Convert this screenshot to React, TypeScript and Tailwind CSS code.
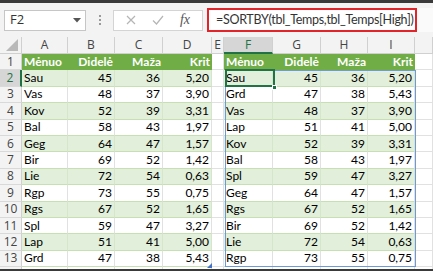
import React from "react";

const left: [string, string, string, string][] = [
  ["Sau", "45", "36", "5,20"],
  ["Vas", "48", "37", "3,90"],
  ["Kov", "52", "39", "3,31"],
  ["Bal", "58", "43", "1,97"],
  ["Geg", "64", "47", "1,57"],
  ["Bir", "69", "52", "1,42"],
  ["Lie", "72", "54", "0,63"],
  ["Rgp", "73", "55", "0,75"],
  ["Rgs", "67", "52", "1,65"],
  ["Spl", "59", "47", "3,27"],
  ["Lap", "51", "41", "5,00"],
  ["Grd", "47", "38", "5,43"],
];

const right: [string, string, string, string][] = [
  ["Sau", "45", "36", "5,20"],
  ["Grd", "47", "38", "5,43"],
  ["Vas", "48", "37", "3,90"],
  ["Lap", "51", "41", "5,00"],
  ["Kov", "52", "39", "3,31"],
  ["Bal", "58", "43", "1,97"],
  ["Spl", "59", "47", "3,27"],
  ["Geg", "64", "47", "1,57"],
  ["Rgs", "67", "52", "1,65"],
  ["Bir", "69", "52", "1,42"],
  ["Lie", "72", "54", "0,63"],
  ["Rgp", "73", "55", "0,75"],
];

const cols = ["A", "B", "C", "D", "E", "F", "G", "H", "I", ""];
const headers = ["Mėnuo", "Didelė", "Maža", "Krit"];

function TableCells({ row, data }: { row: number; data: [string, string, string, string][] }) {
  if (row === 1) {
    return (
      <>
        {headers.map((h, i) => (
          <div
            key={h}
            className={`bg-[#70ad47] text-white font-bold flex items-center px-[2px] ${i === 0 ? "justify-start" : "justify-end"}`}
          >
            {h}
          </div>
        ))}
      </>
    );
  }
  const d = data[row - 2];
  const band = row % 2 === 0;
  return (
    <>
      {d.map((v, i) => (
        <div
          key={i}
          className={`flex items-center px-[2px] border-b border-r ${band ? "bg-[#e2efda] border-b-[#c6e0b4] border-r-[#d6e6cc]" : "bg-white border-b-[#c6e0b4] border-r-[#e1e1e1]"} ${i === 0 ? "justify-start" : "justify-end"}`}
        >
          {v}
        </div>
      ))}
    </>
  );
}

function Blank() {
  return <div className="border-r border-b border-[#e1e1e1]" />;
}

export default function App() {
  const rows = Array.from({ length: 13 }, (_, i) => i + 1);
  return (
    <div className="w-[433px] h-[275px] overflow-hidden bg-white flex flex-col font-['Lato',sans-serif] text-[12px] text-black">
      <div className="h-[3px] bg-[#3a3a3a] shrink-0" />
      {/* toolbar */}
      <div className="h-[34px] shrink-0 bg-[#f3f3f3] flex items-center pl-[4px]">
        <div className="w-[82px] h-[21px] bg-white border border-[#c6c6c6] flex items-center justify-between pl-[5px] pr-[3px] text-[13px] text-[#333] font-['Open_Sans',sans-serif]">
          <span>F2</span>
          <svg width="8" height="5" viewBox="0 0 8 5" className="mr-[1px]">
            <path d="M0 0 L8 0 L4 4.5 Z" fill="#555" />
          </svg>
        </div>
        <div className="w-[27px] flex flex-col items-center justify-center gap-[2px]">
          <span className="w-[2px] h-[2px] bg-[#9a9a9a]" />
          <span className="w-[2px] h-[2px] bg-[#9a9a9a]" />
          <span className="w-[2px] h-[2px] bg-[#9a9a9a]" />
        </div>
        <div className="w-[90px] h-[21px] bg-white border border-[#d4d4d4] flex items-center justify-around px-[4px]">
          <svg width="10" height="10" viewBox="0 0 10 10">
            <path d="M1 1 L9 9 M9 1 L1 9" stroke="#b5b5b5" strokeWidth="1.2" />
          </svg>
          <svg width="12" height="10" viewBox="0 0 12 10">
            <path d="M1 5.5 L4.5 9 L11 1" stroke="#b5b5b5" strokeWidth="1.2" fill="none" />
          </svg>
          <span className="font-['Liberation_Serif',serif] italic text-[14px] text-[#555] leading-none">fx</span>
        </div>
        <div className="ml-[4px] w-[210px] h-[24px] bg-white border-2 border-[#e0242a] flex items-center pl-[7px] text-[12.5px] text-[#333] tracking-[-0.3px] whitespace-nowrap overflow-hidden">
          =SORTBY(tbl_Temps,tbl_Temps[High])
        </div>
        <div className="flex-1 h-[24px] bg-[#fafafa]" />
      </div>
      {/* grid */}
      <div className="relative h-[232px] shrink-0 overflow-hidden">
        <div className="grid grid-cols-[22px_46px_47px_48px_49px_12px_49px_48px_47px_47px_1fr] grid-rows-[17px_repeat(14,16.4px)]">
          {/* column headers */}
          <div className="bg-[#f3f3f3] border-r border-b border-[#d0d0d0] relative">
            <svg width="12" height="12" viewBox="0 0 12 12" className="absolute right-[3px] bottom-[2px]">
              <path d="M12 0 L12 12 L0 12 Z" fill="#b9b9b9" />
            </svg>
          </div>
          {cols.map((c) => (
            <div
              key={c || "J"}
              className={`flex items-center justify-center text-[12px] font-['Open_Sans',sans-serif] border-r border-[#d0d0d0] ${c === "F" ? "bg-[#d6d6d6] text-[#217346] border-b-2 border-b-[#217346]" : "bg-[#f3f3f3] text-[#444] border-b border-b-[#d0d0d0]"}`}
            >
              {c}
            </div>
          ))}
          {rows.map((r) => (
            <React.Fragment key={r}>
              <div
                className={`flex items-center justify-center text-[12px] font-['Open_Sans',sans-serif] border-b border-[#d9d9d9] ${r === 2 ? "bg-[#d6d6d6] text-[#217346] border-r-2 border-r-[#217346]" : "bg-[#f3f3f3] text-[#444] border-r border-r-[#d0d0d0]"}`}
              >
                {r}
              </div>
              <TableCells row={r} data={left} />
              <Blank />
              <TableCells row={r} data={right} />
              <Blank />
            </React.Fragment>
          ))}
          <div className="bg-[#f3f3f3] border-r border-[#d0d0d0]" />
          <Blank />
          <Blank />
          <Blank />
          <Blank />
          <Blank />
          <Blank />
          <Blank />
          <Blank />
          <Blank />
          <Blank />
        </div>
        {/* spill range border */}
        <div className="absolute left-[225px] top-[33.4px] w-[191px] h-[197px] border border-[#6f9ad8] pointer-events-none" />
        {/* active cell */}
        <div className="absolute left-[225px] top-[32.4px] w-[50px] h-[18px] border-2 border-[#217346] pointer-events-none" />
        <div className="absolute left-[272px] top-[48px] w-[5px] h-[5px] bg-[#217346] border border-white pointer-events-none" />
        {/* resize handle left table */}
        <svg width="5" height="5" viewBox="0 0 5 5" className="absolute left-[207px] top-[226px] pointer-events-none">
          <path d="M5 0 L5 5 L0 5 Z" fill="#4472c4" />
        </svg>
      </div>
      <div className="h-[2px] shrink-0 bg-[#3a3a3a]" />
      <div className="flex-1 bg-white" />
    </div>
  );
}
